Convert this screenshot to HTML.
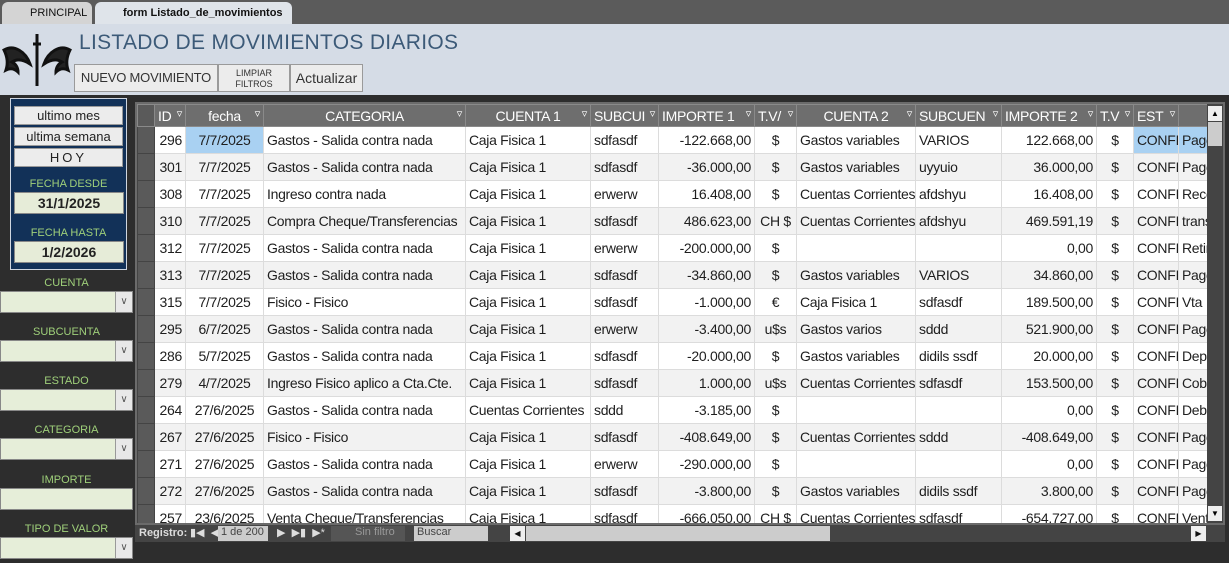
<!DOCTYPE html>
<html><head><meta charset="utf-8"><style>
*{box-sizing:border-box;margin:0;padding:0}
body{width:1229px;height:563px;overflow:hidden;background:#2d2d2d;font-family:"Liberation Sans",Arial,sans-serif;position:relative}
.abs{position:absolute;white-space:nowrap}
.tabbar{left:0;top:0;width:1229px;height:24px;background:#5b5b5b}
.tab{top:2px;height:22px;background:#d4d4d4;border-radius:6px 6px 0 0;font-size:11px;line-height:22px;color:#111;padding-left:28px}
.hdr{left:0;top:24px;width:1229px;height:71px;background:#d5dce6}
.title{left:79px;top:31px;font-size:21px;color:#3c5a78;letter-spacing:0.3px}
.btn{background:#ececec;border:1px solid #9a9a9a;color:#333;text-align:center}
.blue{left:10px;top:98px;width:117px;height:172px;background:#123158;border:1px solid #cfd6e0}
.sb{left:3px;width:109px;height:19px;background:#ececec;border:1px solid #999;font-size:13px;text-align:center;line-height:18px;color:#222}
.lbl{font-size:11px;color:#9fd07a;text-align:center}
.datebox{left:3px;width:110px;height:22px;background:#e6ecd8;border:1px solid #888;font-weight:bold;font-size:14px;text-align:center;line-height:20px;color:#222}
.combo{left:0;width:133px;height:22px;background:#e6eed9;border:1px solid #888}
.combo i{position:absolute;right:0;top:0;width:17px;height:20px;background:#e8e8e8;border-left:1px solid #999;font-style:normal;font-size:10px;color:#555;text-align:center;line-height:20px}
.grid{left:135px;top:102px;width:1090px;height:423px;background:#fff;overflow:hidden;border:2px solid #6b6b6b}
table{border-collapse:collapse;table-layout:fixed;font-size:14px;letter-spacing:-0.3px;color:#1e1e1e}
td,th{height:27px;white-space:nowrap;overflow:hidden;border:1px solid #dcdcdc;padding:0 3px}
th{height:22px;background:#6e6e6e;color:#fff;font-weight:normal;border:1px solid #8a8a8a;text-align:center;position:relative}
th span{position:absolute;right:3px;top:2px;font-size:11px}
tr:nth-child(odd) td{background:#f2f2f2}
tr:nth-child(even) td{background:#fff}
td.sel{background:#5a5a5a!important;border-color:#444}
.r{text-align:right}.c{text-align:center}
td.hl{background:#a9d1f2!important}
.nav{left:135px;top:525px;width:1090px;height:17px;background:#444;font-size:11px;color:#ddd}
</style></head><body>
<div class="abs tabbar"></div>
<div class="abs tab" style="left:2px;width:90px;">PRINCIPAL</div>
<div class="abs tab" style="left:95px;width:197px;background:#dfe4ea;font-weight:bold;">form Listado_de_movimientos</div>
<div class="abs hdr"></div>
<svg class="abs" style="left:2px;top:32px" width="70" height="58" viewBox="0 0 70 58"><path d="M35 2v52M31 12h8M2 18c10-6 22 2 26 14 -6-4-12-6-18-2 4 2 6 6 6 10-4-4-8-4-12-2 2-6 2-12-2-20zM68 18c-10-6-22 2-26 14 6-4 12-6 18-2-4 2-6 6-6 10 4-4 8-4 12-2-2-6-2-12 2-20z" stroke="#111" stroke-width="3" fill="#222"/></svg>
<div class="abs title">LISTADO DE MOVIMIENTOS DIARIOS</div>
<div class="abs btn" style="left:74px;top:64px;width:144px;height:28px;font-size:13px;line-height:26px;letter-spacing:-0.2px">NUEVO MOVIMIENTO</div>
<div class="abs btn" style="left:218px;top:64px;width:72px;height:28px;font-size:9px;line-height:11px;padding-top:3px;overflow:hidden;white-space:normal">LIMPIAR<br>FILTROS</div>
<div class="abs btn" style="left:290px;top:64px;width:73px;height:28px;font-size:14px;line-height:26px">Actualizar</div>

<div class="abs blue">
<div class="abs sb" style="top:7px">ultimo mes</div>
<div class="abs sb" style="top:28px">ultima semana</div>
<div class="abs sb" style="top:49px;letter-spacing:3px">HOY</div>
<div class="abs lbl" style="left:0;width:115px;top:79px">FECHA DESDE</div>
<div class="abs datebox" style="top:93px">31/1/2025</div>
<div class="abs lbl" style="left:0;width:115px;top:128px">FECHA HASTA</div>
<div class="abs datebox" style="top:142px">1/2/2026</div>
</div>
<div class="abs lbl" style="left:0;width:133px;top:277px">CUENTA</div>
<div class="abs combo" style="top:291px"><i>&#8744;</i></div>
<div class="abs lbl" style="left:0;width:133px;top:326px">SUBCUENTA</div>
<div class="abs combo" style="top:340px"><i>&#8744;</i></div>
<div class="abs lbl" style="left:0;width:133px;top:375px">ESTADO</div>
<div class="abs combo" style="top:389px"><i>&#8744;</i></div>
<div class="abs lbl" style="left:0;width:133px;top:424px">CATEGORIA</div>
<div class="abs combo" style="top:438px"><i>&#8744;</i></div>
<div class="abs lbl" style="left:0;width:133px;top:474px">IMPORTE</div>
<div class="abs combo" style="top:488px"></div>
<div class="abs lbl" style="left:0;width:133px;top:523px">TIPO DE VALOR</div>
<div class="abs combo" style="top:537px"><i>&#8744;</i></div>

<div class="abs grid">
<table style="width:1072px">
<colgroup><col style="width:17px"><col style="width:31px"><col style="width:78px"><col style="width:202px"><col style="width:125px"><col style="width:68px"><col style="width:96px"><col style="width:42px"><col style="width:119px"><col style="width:86px"><col style="width:95px"><col style="width:37px"><col style="width:45px"><col style="width:31px"></colgroup>
<tr><th style="background:#5a5a5a"></th><th style="text-align:left">ID<span>&#9663;</span></th><th>fecha<span>&#9663;</span></th><th>CATEGORIA<span>&#9663;</span></th><th>CUENTA 1<span>&#9663;</span></th><th style="text-align:left">SUBCUI<span>&#9663;</span></th><th style="text-align:left">IMPORTE 1<span>&#9663;</span></th><th style="text-align:left">T.V/<span>&#9663;</span></th><th>CUENTA 2<span>&#9663;</span></th><th style="text-align:left">SUBCUEN<span>&#9663;</span></th><th style="text-align:left">IMPORTE 2<span>&#9663;</span></th><th style="text-align:left">T.V<span>&#9663;</span></th><th style="text-align:left">EST<span>&#9663;</span></th><th></th></tr>
<tr><td class="sel"></td><td class="r" style="background:#fff">296</td><td class="c hl">7/7/2025</td><td>Gastos - Salida contra nada</td><td>Caja Fisica 1</td><td>sdfasdf</td><td class="r">-122.668,00</td><td class="c">$</td><td>Gastos variables</td><td>VARIOS</td><td class="r">122.668,00</td><td class="c">$</td><td class="hl">CONFI</td><td class="hl">Pago</td></tr>
<tr><td class="sel"></td><td class="r">301</td><td class="c">7/7/2025</td><td>Gastos - Salida contra nada</td><td>Caja Fisica 1</td><td>sdfasdf</td><td class="r">-36.000,00</td><td class="c">$</td><td>Gastos variables</td><td>uyyuio</td><td class="r">36.000,00</td><td class="c">$</td><td>CONFI</td><td>Pago</td></tr>
<tr><td class="sel"></td><td class="r">308</td><td class="c">7/7/2025</td><td>Ingreso contra nada</td><td>Caja Fisica 1</td><td>erwerw</td><td class="r">16.408,00</td><td class="c">$</td><td>Cuentas Corrientes</td><td>afdshyu</td><td class="r">16.408,00</td><td class="c">$</td><td>CONFI</td><td>Reco</td></tr>
<tr><td class="sel"></td><td class="r">310</td><td class="c">7/7/2025</td><td>Compra Cheque/Transferencias</td><td>Caja Fisica 1</td><td>sdfasdf</td><td class="r">486.623,00</td><td class="c">CH $</td><td>Cuentas Corrientes</td><td>afdshyu</td><td class="r">469.591,19</td><td class="c">$</td><td>CONFI</td><td>trans</td></tr>
<tr><td class="sel"></td><td class="r">312</td><td class="c">7/7/2025</td><td>Gastos - Salida contra nada</td><td>Caja Fisica 1</td><td>erwerw</td><td class="r">-200.000,00</td><td class="c">$</td><td></td><td></td><td class="r">0,00</td><td class="c">$</td><td>CONFI</td><td>Retir</td></tr>
<tr><td class="sel"></td><td class="r">313</td><td class="c">7/7/2025</td><td>Gastos - Salida contra nada</td><td>Caja Fisica 1</td><td>sdfasdf</td><td class="r">-34.860,00</td><td class="c">$</td><td>Gastos variables</td><td>VARIOS</td><td class="r">34.860,00</td><td class="c">$</td><td>CONFI</td><td>Pago</td></tr>
<tr><td class="sel"></td><td class="r">315</td><td class="c">7/7/2025</td><td>Fisico - Fisico</td><td>Caja Fisica 1</td><td>sdfasdf</td><td class="r">-1.000,00</td><td class="c">€</td><td>Caja Fisica 1</td><td>sdfasdf</td><td class="r">189.500,00</td><td class="c">$</td><td>CONFI</td><td>Vta</td></tr>
<tr><td class="sel"></td><td class="r">295</td><td class="c">6/7/2025</td><td>Gastos - Salida contra nada</td><td>Caja Fisica 1</td><td>erwerw</td><td class="r">-3.400,00</td><td class="c">u$s</td><td>Gastos varios</td><td>sddd</td><td class="r">521.900,00</td><td class="c">$</td><td>CONFI</td><td>Pago</td></tr>
<tr><td class="sel"></td><td class="r">286</td><td class="c">5/7/2025</td><td>Gastos - Salida contra nada</td><td>Caja Fisica 1</td><td>sdfasdf</td><td class="r">-20.000,00</td><td class="c">$</td><td>Gastos variables</td><td>didils ssdf</td><td class="r">20.000,00</td><td class="c">$</td><td>CONFI</td><td>Depo</td></tr>
<tr><td class="sel"></td><td class="r">279</td><td class="c">4/7/2025</td><td>Ingreso Fisico aplico a Cta.Cte.</td><td>Caja Fisica 1</td><td>sdfasdf</td><td class="r">1.000,00</td><td class="c">u$s</td><td>Cuentas Corrientes</td><td>sdfasdf</td><td class="r">153.500,00</td><td class="c">$</td><td>CONFI</td><td>Cobr</td></tr>
<tr><td class="sel"></td><td class="r">264</td><td class="c">27/6/2025</td><td>Gastos - Salida contra nada</td><td>Cuentas Corrientes</td><td>sddd</td><td class="r">-3.185,00</td><td class="c">$</td><td></td><td></td><td class="r">0,00</td><td class="c">$</td><td>CONFI</td><td>Debi</td></tr>
<tr><td class="sel"></td><td class="r">267</td><td class="c">27/6/2025</td><td>Fisico - Fisico</td><td>Caja Fisica 1</td><td>sdfasdf</td><td class="r">-408.649,00</td><td class="c">$</td><td>Cuentas Corrientes</td><td>sddd</td><td class="r">-408.649,00</td><td class="c">$</td><td>CONFI</td><td>Pago</td></tr>
<tr><td class="sel"></td><td class="r">271</td><td class="c">27/6/2025</td><td>Gastos - Salida contra nada</td><td>Caja Fisica 1</td><td>erwerw</td><td class="r">-290.000,00</td><td class="c">$</td><td></td><td></td><td class="r">0,00</td><td class="c">$</td><td>CONFI</td><td>Pago</td></tr>
<tr><td class="sel"></td><td class="r">272</td><td class="c">27/6/2025</td><td>Gastos - Salida contra nada</td><td>Caja Fisica 1</td><td>sdfasdf</td><td class="r">-3.800,00</td><td class="c">$</td><td>Gastos variables</td><td>didils ssdf</td><td class="r">3.800,00</td><td class="c">$</td><td>CONFI</td><td>Pago</td></tr>
<tr><td class="sel"></td><td class="r">257</td><td class="c">23/6/2025</td><td>Venta  Cheque/Transferencias</td><td>Caja Fisica 1</td><td>sdfasdf</td><td class="r">-666.050,00</td><td class="c">CH $</td><td>Cuentas Corrientes</td><td>sdfasdf</td><td class="r">-654.727,00</td><td class="c">$</td><td>CONFI</td><td>Vent</td></tr>
</table>
<div class="abs" style="left:1070px;top:0;width:16px;height:421px;background:#444">
<div class="abs" style="left:1px;top:2px;width:14px;height:15px;background:#eee;font-size:8px;text-align:center;line-height:15px">&#9650;</div>
<div class="abs" style="left:1px;top:18px;width:14px;height:24px;background:#ccc"></div>
<div class="abs" style="left:1px;top:402px;width:14px;height:15px;background:#eee;font-size:8px;text-align:center;line-height:15px">&#9660;</div>
</div>
</div>
<div class="abs nav">
<span class="abs" style="left:4px;top:2px;font-weight:bold">Registro:</span>
<span class="abs" style="left:55px;top:1px">&#9646;&#9664;&nbsp; &#9664;</span>
<span class="abs" style="left:83px;top:1px;width:50px;height:15px;background:#ccc;color:#444;padding-left:3px">1 de 200</span>
<span class="abs" style="left:142px;top:1px">&#9654; &nbsp;&#9654;&#9646; &nbsp;&#9654;*</span>
<span class="abs" style="left:196px;top:1px;width:74px;height:15px;background:#555;color:#999;padding-left:24px">Sin filtro</span>
<span class="abs" style="left:279px;top:1px;width:74px;height:15px;background:#ccc;color:#444;padding-left:3px">Buscar</span>
<span class="abs" style="left:375px;top:1px;width:15px;height:15px;background:#eee;color:#111;font-size:8px;text-align:center;line-height:15px">&#9664;</span>
<span class="abs" style="left:391px;top:1px;width:304px;height:15px;background:#ccc"></span>
<span class="abs" style="left:1056px;top:1px;width:15px;height:15px;background:#eee;color:#111;font-size:8px;text-align:center;line-height:15px">&#9654;</span>
</div>
</body></html>
